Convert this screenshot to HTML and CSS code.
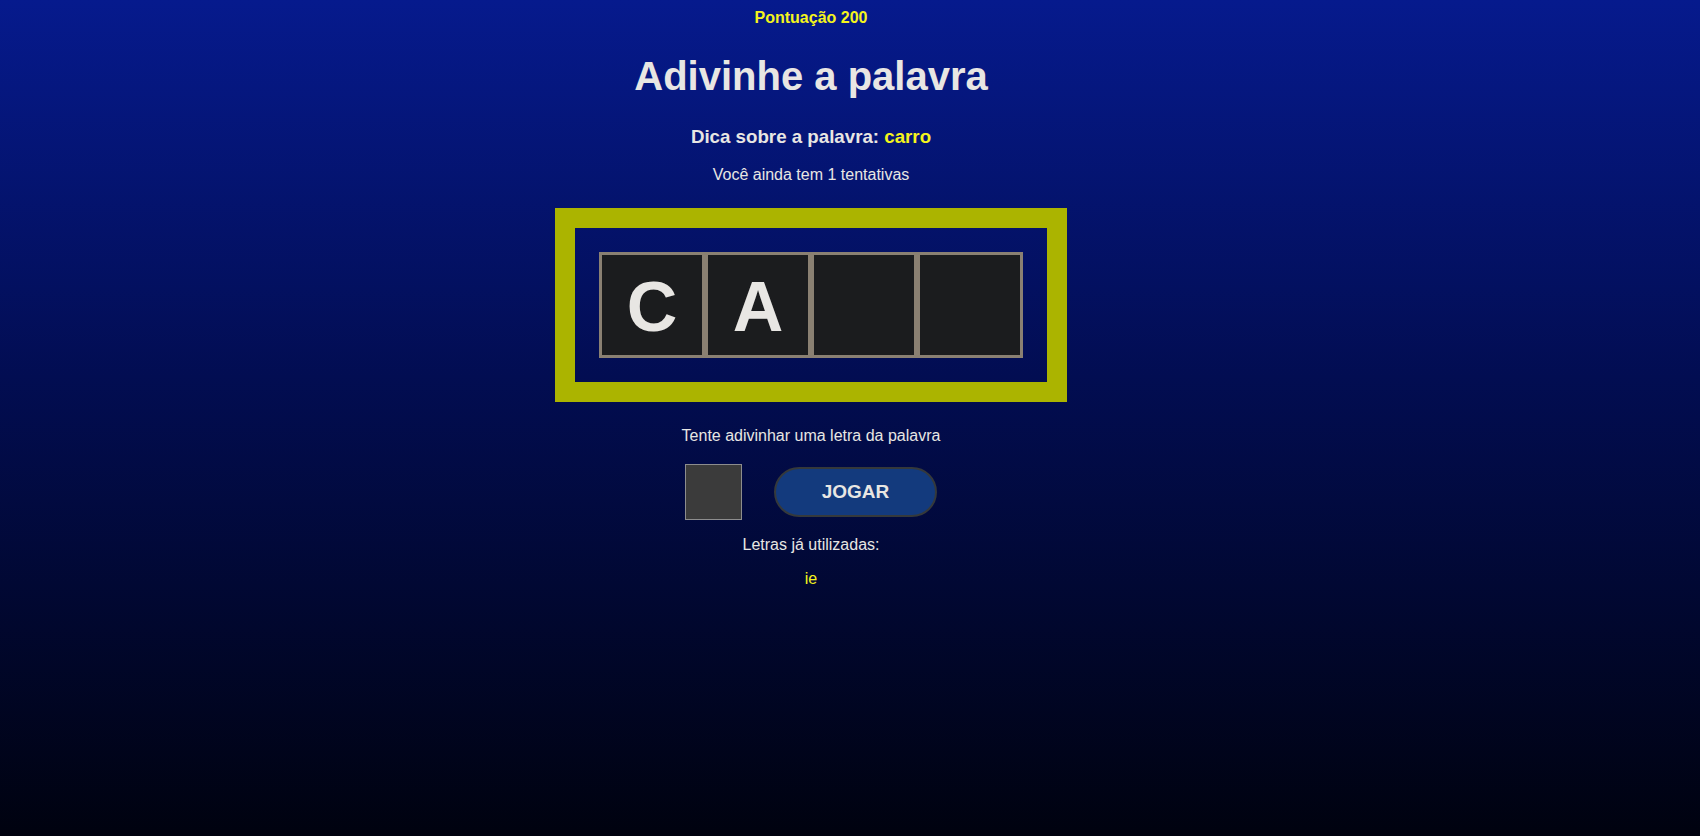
FILE: index.html
```html
<!DOCTYPE html>
<html lang="pt-BR">
<head>
<meta charset="utf-8">
<title>Adivinhe a palavra</title>
<link rel="stylesheet" href="styles.css">
</head>
<body>
<main class="game">
  <div class="score">Pontuação 200</div>
  <h1 class="title">Adivinhe a palavra</h1>
  <h3 class="hint">Dica sobre a palavra: <span class="hl">carro</span></h3>
  <p class="tries">Você ainda tem 1 tentativas</p>
  <div class="board">
    <div class="tiles">
      <div class="tile">C</div>
      <div class="tile">A</div>
      <div class="tile"></div>
      <div class="tile"></div>
    </div>
  </div>
  <p class="prompt">Tente adivinhar uma letra da palavra</p>
  <div class="controls">
    <input class="letter-input" type="text" maxlength="1">
    <button class="play-btn" type="button">JOGAR</button>
  </div>
  <p class="used-label">Letras já utilizadas:</p>
  <p class="used">ie</p>
</main>
</body>
</html>
```
FILE: styles.css
```css
html {
  min-height: 100%;
  background: linear-gradient(to bottom, #061a8d 0%, #020d52 45%, #00020f 100%);
}
body {
  margin: 9px 8px 8px;
  font-family: "Liberation Sans", Arial, sans-serif;
  color: #e8e6e3;
}
.game {
  width: 1606px;
  display: flex;
  flex-direction: column;
  align-items: center;
  text-align: center;
}
.score {
  font-size: 16px;
  font-weight: bold;
  color: #f4f41c;
  line-height: 18px;
}
.title {
  font-size: 40px;
  line-height: 46px;
  margin: 26px 0 0;
  font-weight: bold;
}
.hint {
  font-size: 18.72px;
  line-height: 22px;
  margin: 27px 0 0;
  font-weight: bold;
}
.hl {
  color: #f4f41c;
}
.tries {
  font-size: 16px;
  line-height: 18px;
  margin: 18px 0 0;
}
.board {
  margin-top: 24px;
  width: 512px;
  box-sizing: border-box;
  border: 20px solid #abb400;
  padding: 24px;
  display: flex;
  justify-content: center;
}
.tiles {
  display: flex;
}
.tile {
  width: 106px;
  height: 106px;
  box-sizing: border-box;
  border: 3px solid #8a8072;
  padding-top: 4px;
  background: #1b1c1e;
  color: #e8e6e3;
  font-size: 70px;
  font-weight: bold;
  line-height: 1;
  display: flex;
  align-items: center;
  justify-content: center;
}
.prompt {
  font-size: 16px;
  line-height: 18px;
  margin: 25px 0 0;
}
.controls {
  margin-top: 19px;
  display: flex;
  align-items: center;
  gap: 32px;
}
.letter-input {
  width: 57px;
  height: 56px;
  box-sizing: border-box;
  background: #3b3b3b;
  border: 1px solid #8d8d8d;
  color: #e8e6e3;
  font-size: 24px;
  text-align: center;
  padding: 0;
}
.play-btn {
  width: 163px;
  height: 50px;
  box-sizing: border-box;
  border: 2px solid #35393b;
  border-radius: 25px;
  background: #133a7d;
  color: #e8e6e3;
  font-family: "Liberation Sans", Arial, sans-serif;
  font-size: 19px;
  font-weight: bold;
  padding: 0;
}
.used-label {
  font-size: 16px;
  line-height: 18px;
  margin: 16px 0 0;
}
.used {
  font-size: 16px;
  line-height: 18px;
  margin: 16px 0 0;
  color: #f4f41c;
}
```
